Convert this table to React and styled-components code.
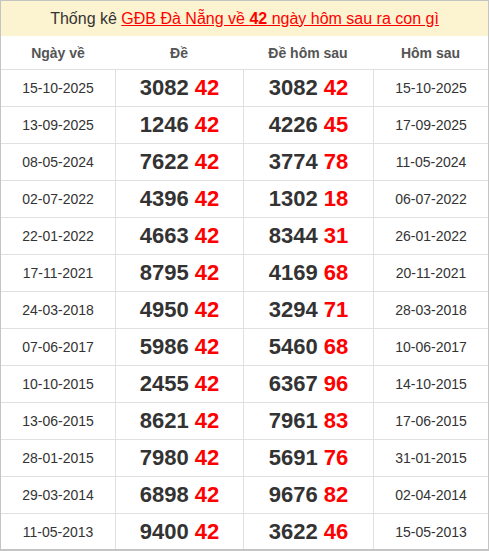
import React from 'react'
import styled, { createGlobalStyle } from 'styled-components'

const GlobalStyle = createGlobalStyle`
  html, body {
    margin: 0;
    padding: 0;
    background: #fff;
  }
  body {
    font-family: 'Liberation Sans', Arial, sans-serif;
  }
`

const rows = [
  ['15-10-2025', '3082', '42', '3082', '42', '15-10-2025'],
  ['13-09-2025', '1246', '42', '4226', '45', '17-09-2025'],
  ['08-05-2024', '7622', '42', '3774', '78', '11-05-2024'],
  ['02-07-2022', '4396', '42', '1302', '18', '06-07-2022'],
  ['22-01-2022', '4663', '42', '8344', '31', '26-01-2022'],
  ['17-11-2021', '8795', '42', '4169', '68', '20-11-2021'],
  ['24-03-2018', '4950', '42', '3294', '71', '28-03-2018'],
  ['07-06-2017', '5986', '42', '5460', '68', '10-06-2017'],
  ['10-10-2015', '2455', '42', '6367', '96', '14-10-2015'],
  ['13-06-2015', '8621', '42', '7961', '83', '17-06-2015'],
  ['28-01-2015', '7980', '42', '5691', '76', '31-01-2015'],
  ['29-03-2014', '6898', '42', '9676', '82', '02-04-2014'],
  ['11-05-2013', '9400', '42', '3622', '46', '15-05-2013'],
]

const App = () => {
  return (
    <>
      <GlobalStyle />
      <Wrapper>
        <Title>
          Thống kê{' '}
          <TitleLink href="#">
            GĐB Đà Nẵng về <strong>42</strong> ngày hôm sau ra con gì
          </TitleLink>
        </Title>
        <Table>
          <HeadCell>Ngày về</HeadCell>
          <HeadCell>Đề</HeadCell>
          <HeadCell>Đề hôm sau</HeadCell>
          <HeadCell>Hôm sau</HeadCell>
          {rows.map((r) => (
            <React.Fragment key={r[0]}>
              <DateCell>{r[0]}</DateCell>
              <NumCell $divider>
                {r[1]} <Red>{r[2]}</Red>
              </NumCell>
              <NumCell $divider>
                {r[3]} <Red>{r[4]}</Red>
              </NumCell>
              <DateCell $divider>{r[5]}</DateCell>
            </React.Fragment>
          ))}
        </Table>
      </Wrapper>
    </>
  )
}

export default App

const Wrapper = styled.div`
  width: 489px;
  height: 551px;
  box-sizing: border-box;
  border: 1px solid #c4c4c4;
  border-bottom-width: 2px;
  overflow: hidden;
`
const Title = styled.div`
  height: 35px;
  display: flex;
  align-items: center;
  justify-content: center;
  background: #fcf3d0;
  color: #333;
  font-size: 16px;
  white-space: pre;
`
const TitleLink = styled.a`
  color: #ff0000;
  text-decoration: underline;
  strong {
    font-weight: bold;
  }
`
const Table = styled.div`
  display: grid;
  grid-template-columns: 114px 128px 130px 1fr;
  grid-template-rows: 33px;
  grid-auto-rows: 37px;
`
const HeadCell = styled.div`
  display: flex;
  align-items: center;
  justify-content: center;
  font-size: 14px;
  font-weight: bold;
  color: #555;
`
const Cell = styled.div`
  display: flex;
  align-items: center;
  justify-content: center;
  box-sizing: border-box;
  border-top: 1px solid #e0e0e0;
  border-left: ${(p) => (p.$divider ? '1px solid #e0e0e0' : 'none')};
  color: #333;
`
const DateCell = styled(Cell)`
  font-size: 14px;
`
const NumCell = styled(Cell)`
  font-size: 22px;
  font-weight: bold;
  white-space: pre;
`
const Red = styled.span`
  color: #ff0000;
`
